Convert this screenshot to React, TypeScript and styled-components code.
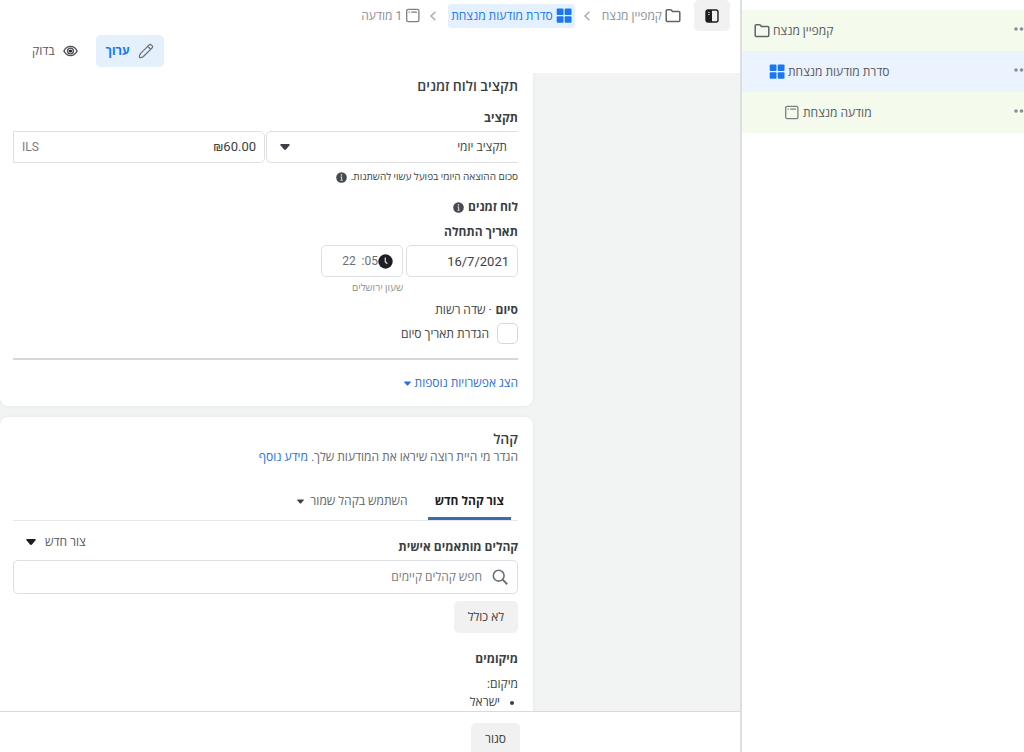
import React from "react";
import styled, { createGlobalStyle, css } from "styled-components";

const GlobalStyle = createGlobalStyle`
  *, *::before, *::after { box-sizing: border-box; }
  body {
    margin: 0;
    background: #fff;
    color: #3c3f42;
    font: 12px/18px Roboto, "Open Sans", sans-serif;
  }
  button, input, select { font: inherit; color: inherit; }
  h2, h3, p, ul { margin: 0; padding: 0; }
`;

const strong = 670;

const Page = styled.div`
  display: flex;
  height: 100vh;
  overflow: hidden;
`;

const Sidebar = styled.nav`
  direction: ltr;
  flex: 0 0 284px;
  border-left: 2px solid #dcdfe0;
  padding-top: 10px;
  overflow: hidden;
`;

const TreeRow = styled.div<{ $level: number; $active?: boolean }>`
  display: flex;
  align-items: center;
  height: 41px;
  padding-left: ${(p) => 12 + p.$level * 15}px;
  background: ${(p) => (p.$active ? "#ebf3ff" : "#f4faec")};
`;

const TreeLink = styled.a`
  display: flex;
  flex: 1;
  align-items: center;
  gap: 3px;
  color: #55585c;
  text-decoration: none;
`;

const MoreButton = styled.button`
  display: flex;
  padding: 0 0 3px;
  border: 0;
  background: none;
  color: #8a8f98;
`;

const Main = styled.main`
  display: flex;
  flex: 1;
  flex-direction: column;
  min-width: 0;
`;

const Breadcrumbs = styled.nav`
  display: flex;
  align-items: center;
  height: 31px;
  padding-right: 10px;
`;

const PanelToggle = styled.button`
  display: flex;
  align-items: center;
  justify-content: center;
  width: 36px;
  height: 31px;
  margin-left: 13px;
  padding: 0;
  border: 0;
  border-radius: 5px;
  background: #f1f1f1;
  color: #1c1e21;
`;

const Crumb = styled.a<{ $active?: boolean }>`
  display: flex;
  align-items: center;
  gap: 3px;
  height: 24px;
  border-radius: 3px;
  color: #8c8f94;
  text-decoration: none;
  ${(p) =>
    p.$active &&
    css`
      padding: 0 3px;
      background: #e5f0fe;
      color: #1877f2;
    `}
`;

const Separator = styled.span`
  display: flex;
  padding: 0 11px 0 8px;
  color: #a9adb3;
`;

const Modes = styled.div`
  display: flex;
  justify-content: flex-end;
  padding: 4px 0 6px 14px;
`;

const ModeButton = styled.button<{ $active?: boolean }>`
  display: flex;
  align-items: center;
  gap: 8px;
  height: 32px;
  margin-left: 8px;
  padding: 0 10px;
  border: 0;
  border-radius: 5px;
  background: ${(p) => (p.$active ? "#e5f0fd" : "none")};
  color: ${(p) => (p.$active ? "#1877f2" : "#55585c")};
  font-weight: ${(p) => (p.$active ? strong : 400)};
`;

const Workspace = styled.div`
  flex: 1;
  min-height: 0;
  padding-right: 207px;
  background: #f2f4f4;
  overflow: hidden;
`;

const Card = styled.section<{ $first?: boolean }>`
  margin-bottom: 11px;
  padding: ${(p) => (p.$first ? "4px" : "13px")} 15px 14px 13px;
  border-radius: ${(p) => (p.$first ? "0 0 8px 8px" : "8px")};
  background: #fff;
  box-shadow: 0 0 3px #dfe3e3;
`;

const Title = styled.h2`
  font-size: 14px;
  line-height: 18px;
  font-weight: 600;
`;

const Heading = styled.h3`
  display: flex;
  align-items: center;
  gap: 4px;
  font-size: 12px;
  line-height: 18px;
  font-weight: ${strong};
`;

const Label = styled.label`
  display: block;
  font-weight: ${strong};
`;

const Stack = styled.div<{ $top: number; $gap?: number }>`
  display: flex;
  flex-direction: column;
  gap: ${(p) => p.$gap ?? 4}px;
  margin-top: ${(p) => p.$top}px;
`;

const FieldRow = styled.div<{ $gap: number }>`
  display: flex;
  align-items: flex-start;
  gap: ${(p) => p.$gap}px;
`;

const BudgetRow = styled.div`
  display: grid;
  grid-template-columns: 1fr 1fr;
  gap: 1px;
`;

const boxed = css`
  height: 32px;
  border: 1px solid #dddfe2;
  border-radius: 5px;
  background: #fff;
`;

const SelectBox = styled.div`
  ${boxed}
  display: flex;
  align-items: center;
  padding: 0 11px 0 13px;
  border-right: 0;
  border-top-right-radius: 0;
  border-bottom-right-radius: 0;
`;

const BareSelect = styled.select`
  flex: 1;
  min-width: 0;
  padding: 0;
  border: 0;
  appearance: none;
  background: none;
`;

const MoneyBox = styled.div`
  ${boxed}
  display: flex;
  align-items: center;
  padding: 0 8px;
  border-top-left-radius: 0;
  border-bottom-left-radius: 0;
`;

const BareInput = styled.input<{ $size?: number }>`
  flex: 1;
  width: 0;
  min-width: 0;
  padding: 0;
  border: 0;
  outline: 0;
  background: none;
  font-size: ${(p) => p.$size ?? 12}px;
  text-align: right;
  &::placeholder { color: #777b82; opacity: 1; }
`;

const Unit = styled.span`
  color: #777b80;
`;

const DateInput = styled.input`
  ${boxed}
  width: 112px;
  padding: 0 8px;
  font-size: 13px;
`;

const TimeColumn = styled.div`
  width: 82px;
`;

const TimeBox = styled.div`
  ${boxed}
  display: flex;
  align-items: center;
  padding: 0 9px;
  color: #6b6f75;
`;

const Hint = styled.p<{ $muted?: boolean }>`
  display: flex;
  align-items: center;
  gap: 4px;
  font-size: 10px;
  line-height: 18px;
  color: ${(p) => (p.$muted ? "#8c8f94" : "#3c3f42")};
`;

const TimeHint = styled(Hint)`
  margin-top: 2px;
`;

const Optional = styled.span`
  font-weight: 400;
`;

const CheckLabel = styled.label`
  display: flex;
  align-items: center;
  gap: 8px;
`;

const CheckBox = styled.input`
  appearance: none;
  width: 21px;
  height: 21px;
  margin: 0;
  border: 1px solid #d5d8db;
  border-radius: 5px;
  background: #fff;
`;

const Divider = styled.hr`
  height: 2px;
  margin: 14px 0;
  border: 0;
  background: #d3d8db;
`;

const MoreOptions = styled.button`
  display: flex;
  align-items: center;
  gap: 4px;
  padding: 0;
  border: 0;
  background: none;
  color: #2a6fd3;
`;

const TextLink = styled.a`
  color: #1b6fe0;
  text-decoration: none;
`;

const Intro = styled.p`
  color: #65686c;
`;

const TabBar = styled.div`
  display: flex;
  gap: 13px;
  margin-top: 16px;
  padding-right: 7px;
  border-bottom: 1px solid #e6e8ea;
`;

const Tab = styled.button<{ $active?: boolean }>`
  display: flex;
  align-items: center;
  gap: 6px;
  height: 38px;
  padding: 3px 7px 0;
  border: 0;
  border-bottom: 3px solid ${(p) => (p.$active ? "#4267b2" : "transparent")};
  background: none;
  color: ${(p) => (p.$active ? "#1c1e21" : "#606367")};
  font-weight: ${(p) => (p.$active ? strong : 400)};
`;

const AudienceHeader = styled.div`
  display: flex;
  align-items: flex-end;
  justify-content: space-between;
  height: 39px;
  padding-bottom: 4px;
`;

const CreateButton = styled.button`
  display: flex;
  align-items: center;
  align-self: flex-start;
  gap: 9px;
  height: 18px;
  margin: 12px 0 0 13px;
  padding: 0;
  border: 0;
  background: none;
  color: #55585c;
`;

const SearchBox = styled.div`
  ${boxed}
  display: flex;
  align-items: center;
  gap: 10px;
  height: 34px;
  padding: 0 9px;
`;

const GreyButton = styled.button`
  display: block;
  height: 32px;
  padding: 0 14px;
  border: 0;
  border-radius: 5px;
  background: #f1f1f1;
`;

const Places = styled.ul`
  padding-right: 18px;
`;

const Footer = styled.footer`
  flex: 0 0 41px;
  padding: 11px 220px 0 0;
  border-top: 1px solid #d8dbdc;
  overflow: hidden;
`;

const Svg = styled.svg`
  flex: none;
  display: block;
`;

const FolderIcon = () => (
  <Svg width="16" height="16" viewBox="0 0 16 16" fill="none" stroke="#606468" strokeWidth="1.5" strokeLinejoin="round">
    <path d="M1.2 12.500V2.700q0-1 1-1h3.3q.6 0 1 .6l.9 1.200h6.400q1 0 1 1V12.500q0 1-1 1H2.200q-1 0-1-1z" />
  </Svg>
);

const GridIcon = () => (
  <Svg width="16" height="16" viewBox="0 0 16 16" fill="#1877f2">
    <rect x="0.700" y="0.500" width="6.800" height="6.500" rx="1" />
    <rect x="8.700" y="0.500" width="6.800" height="6.500" rx="1" />
    <rect x="0.700" y="8.200" width="6.800" height="6.500" rx="1" />
    <rect x="8.700" y="8.200" width="6.800" height="6.500" rx="1" />
  </Svg>
);

const AdIcon = () => (
  <Svg width="16" height="16" viewBox="0 0 16 16" fill="none" stroke="#7c8084" strokeWidth="1.3">
    <rect x="1.7" y="1.300" width="12.2" height="12.4" rx="1.4" />
    <path d="M3.6 4.100h1.2M6.2 4.100h5.8" />
  </Svg>
);

const ChevronIcon = () => (
  <Svg width="8" height="12" viewBox="0 0 8 12" fill="none" stroke="currentColor" strokeWidth="1.5">
    <path d="M6.4 1.8 2 6l4.4 4.2" />
  </Svg>
);

const PanelIcon = () => (
  <Svg width="14" height="14" viewBox="0 0 14 14">
    <rect x="1" y="1" width="12" height="12" rx="2" fill="none" stroke="currentColor" strokeWidth="1.4" />
    <path d="M7 1v12H3q-2 0-2-2V3q0-2 2-2z" fill="currentColor" />
    <path d="M3 3.5h1.8M3 5.5h1.8" stroke="#bbb" strokeWidth=".9" />
  </Svg>
);

const PencilIcon = () => (
  <Svg width="16" height="16" viewBox="0 0 16 16" fill="none" stroke="#6f747a" strokeWidth="1.3" strokeLinejoin="round" strokeLinecap="round">
    <path d="M1.500 14.500q-.4-2.300 1-3.900l8.400-8.500q1.300-1.300 2.600 0l.4.4q1.300 1.300 0 2.600l-8.500 8.400q-1.600 1.400-3.900 1z" />
    <path d="M9.700 3.400l2.900 2.900" />
  </Svg>
);

const EyeIcon = () => (
  <Svg width="15" height="12" viewBox="0 0 15 12" fill="none" stroke="#4b4f54" strokeWidth="1.4">
    <path d="M.9 6Q3.2 1.4 7.5 1.4T14.1 6Q11.8 10.600 7.500 10.600T.9 6z" />
    <circle cx="7.5" cy="6" r="2.9" />
    <circle cx="7.5" cy="6" r="1.6" fill="#222" stroke="none" />
  </Svg>
);

const InfoIcon = () => (
  <Svg width="11" height="11" viewBox="0 0 11 11">
    <circle cx="5.5" cy="5.500" r="5.300" fill="#454a50" />
    <path d="M5.600 4.700v3.600M4.500 8.300h2.200M4.600 4.900h1" stroke="#d5d7d9" strokeWidth="1.100" />
    <circle cx="5.500" cy="2.900" r=".8" fill="#d5d7d9" />
  </Svg>
);

const ClockIcon = () => (
  <Svg width="15" height="15" viewBox="0 0 15 15">
    <circle cx="7.500" cy="7.500" r="7.200" fill="#1c1e21" />
    <path d="M7.300 3.500v4.300l2 2" fill="none" stroke="#d8d8d8" strokeWidth="1.300" />
  </Svg>
);

const SearchIcon = () => (
  <Svg width="16" height="16" viewBox="0 0 16 16" fill="none" stroke="#6c7076" strokeWidth="1.600">
    <circle cx="6.700" cy="6.700" r="5.400" />
    <path d="M10.600 10.600l4.600 4.600" strokeWidth="2" />
  </Svg>
);

const DotsIcon = () => (
  <Svg width="10" height="4" viewBox="0 0 10 4" fill="currentColor">
    <circle cx="2" cy="2" r="1.800" />
    <circle cx="7.500" cy="2" r="1.800" />
  </Svg>
);

const Caret = ({ small, color = "#3c4046" }: { small?: boolean; color?: string }) => (
  <Svg width={small ? 7 : 10} height={small ? 5 : 6} viewBox="0 0 10 6" fill={color}>
    <path d="M1 0h8q1 .3.500 1.300L6 5.500q-1 .8-2 0L.5 1.300Q0 .3 1 0z" />
  </Svg>
);

const tree = [
  { name: "קמפיין מנצח", Icon: FolderIcon },
  { name: "סדרת מודעות מנצחת", Icon: GridIcon, active: true },
  { name: "מודעה מנצחת", Icon: AdIcon },
];

export default function App() {
  return (
    <Page dir="rtl" lang="he">
      <GlobalStyle />
      <Sidebar aria-label="מבנה">
        {tree.map(({ name, Icon, active }, level) => (
          <TreeRow key={name} $level={level} $active={active}>
            <TreeLink href="#">
              <Icon />
              {name}
            </TreeLink>
            <MoreButton aria-label="עוד">
              <DotsIcon />
            </MoreButton>
          </TreeRow>
        ))}
      </Sidebar>

      <Main>
        <Breadcrumbs>
          <PanelToggle aria-label="חלונית">
            <PanelIcon />
          </PanelToggle>
          <Crumb href="#">
            <FolderIcon />
            קמפיין מנצח
          </Crumb>
          <Separator><ChevronIcon /></Separator>
          <Crumb href="#" $active>
            <GridIcon />
            סדרת מודעות מנצחת
          </Crumb>
          <Separator><ChevronIcon /></Separator>
          <Crumb href="#">
            <AdIcon />
            1 מודעה
          </Crumb>
        </Breadcrumbs>

        <Modes>
          <ModeButton $active>
            <PencilIcon />
            ערוך
          </ModeButton>
          <ModeButton>
            <EyeIcon />
            בדוק
          </ModeButton>
        </Modes>

        <Workspace>
          <Card $first>
            <Title>תקציב ולוח זמנים</Title>
            <Stack $top={14}>
              <Label htmlFor="budget">תקציב</Label>
              <BudgetRow>
                <SelectBox>
                  <BareSelect id="budget">
                    <option>תקציב יומי</option>
                  </BareSelect>
                  <Caret />
                </SelectBox>
                <MoneyBox>
                  <BareInput $size={13} aria-label="סכום" dir="ltr" defaultValue="₪60.00" />
                  <Unit>ILS</Unit>
                </MoneyBox>
              </BudgetRow>
            </Stack>
            <Stack $top={5}>
              <Hint>
                סכום ההוצאה היומי בפועל עשוי להשתנות.
                <InfoIcon />
              </Hint>
            </Stack>
            <Stack $top={12} $gap={7}>
              <Heading>
                לוח זמנים
                <InfoIcon />
              </Heading>
              <Stack $top={0}>
                <Label htmlFor="start">תאריך התחלה</Label>
                <FieldRow $gap={3}>
                  <DateInput id="start" defaultValue="16/7/2021" />
                  <TimeColumn>
                    <TimeBox>
                      <ClockIcon />
                      <BareInput aria-label="שעה" dir="ltr" defaultValue="22  :05" />
                    </TimeBox>
                    <TimeHint $muted>שעון ירושלים</TimeHint>
                  </TimeColumn>
                </FieldRow>
              </Stack>
            </Stack>
            <Stack $top={4}>
              <Heading>
                סיום <Optional>· שדה רשות</Optional>
              </Heading>
              <CheckLabel>
                <CheckBox type="checkbox" />
                הגדרת תאריך סיום
              </CheckLabel>
            </Stack>
            <Divider />
            <MoreOptions>
              הצג אפשרויות נוספות
              <Caret small color="#2a6fd3" />
            </MoreOptions>
          </Card>

          <Card>
            <Title>קהל</Title>
            <Intro>
              הגדר מי היית רוצה שיראו את המודעות שלך. <TextLink href="#">מידע נוסף</TextLink>
            </Intro>
            <TabBar role="tablist">
              <Tab role="tab" aria-selected $active>צור קהל חדש</Tab>
              <Tab role="tab" aria-selected={false}>
                השתמש בקהל שמור
                <Caret small />
              </Tab>
            </TabBar>
            <AudienceHeader>
              <Label htmlFor="audiences">קהלים מותאמים אישית</Label>
              <CreateButton>
                צור חדש
                <Caret color="#1c1e21" />
              </CreateButton>
            </AudienceHeader>
            <SearchBox>
              <SearchIcon />
              <BareInput id="audiences" placeholder="חפש קהלים קיימים" />
            </SearchBox>
            <Stack $top={7}>
              <FieldRow $gap={0}>
                <GreyButton>לא כולל</GreyButton>
              </FieldRow>
            </Stack>
            <Stack $top={17} $gap={7}>
              <Heading>מיקומים</Heading>
              <div>
                <p>מיקום:</p>
                <Places>
                  <li>ישראל</li>
                </Places>
              </div>
            </Stack>
          </Card>
        </Workspace>

        <Footer>
          <GreyButton>סגור</GreyButton>
        </Footer>
      </Main>
    </Page>
  );
}
